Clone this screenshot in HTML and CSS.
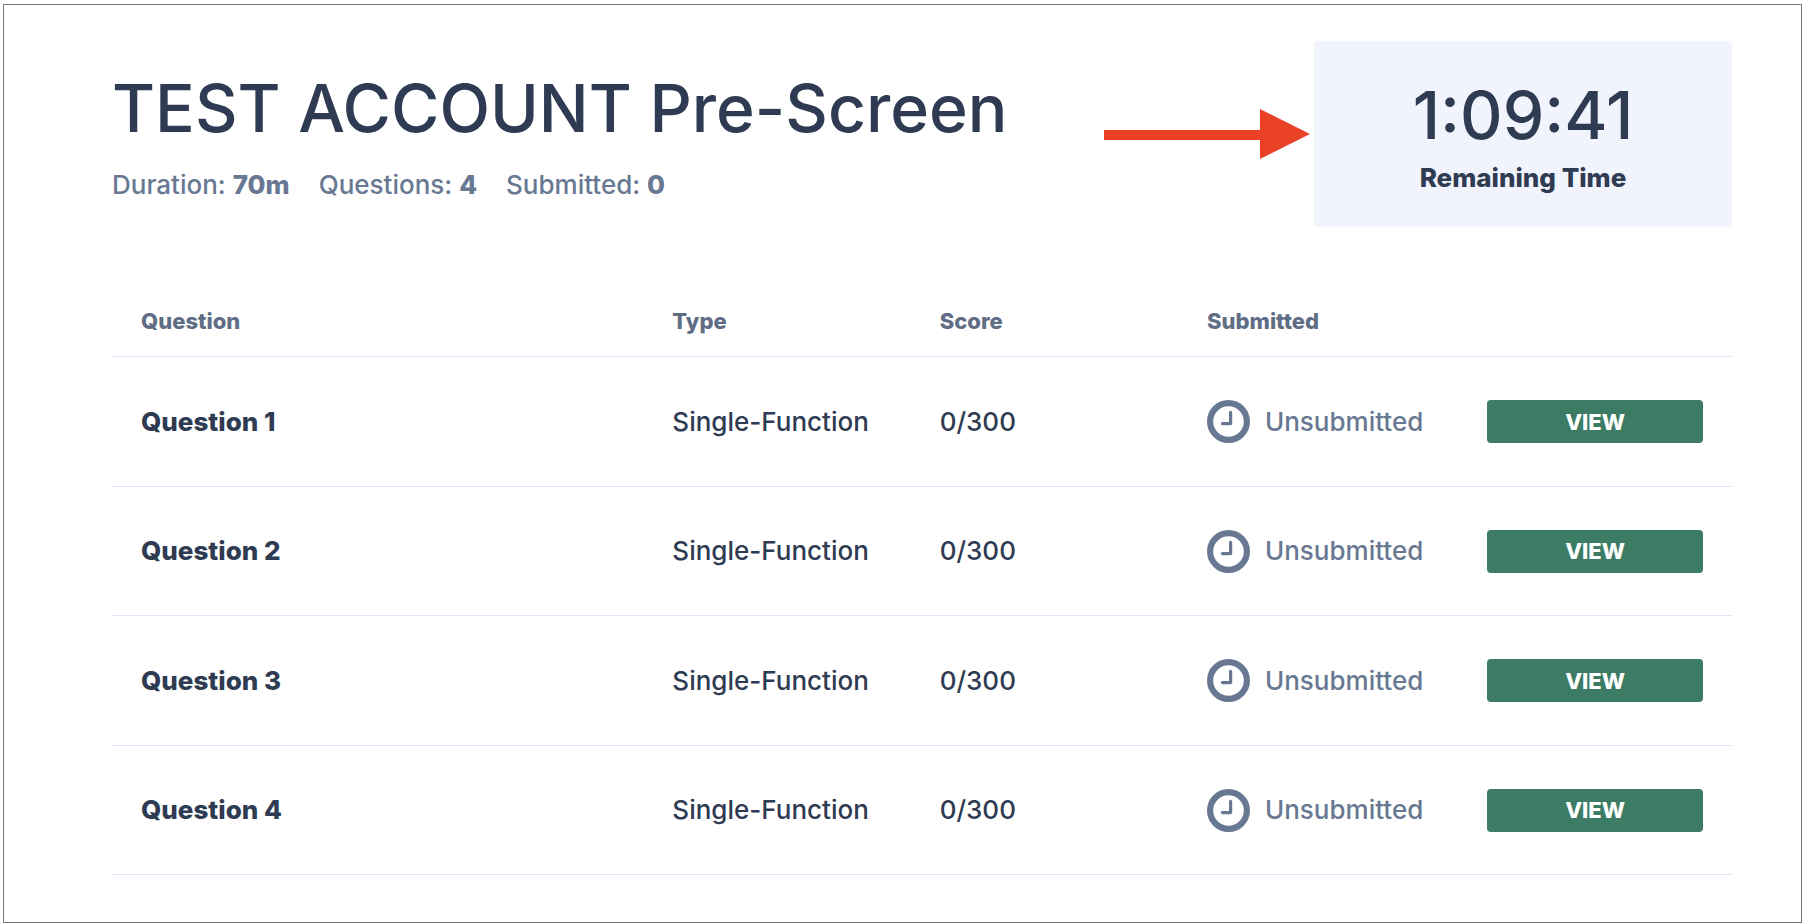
FILE: index.html
```html
<!DOCTYPE html>
<html lang="en">
<head>
  <meta charset="UTF-8">
  <meta name="viewport" content="width=device-width, initial-scale=1.0">
  <title>TEST ACCOUNT Pre-Screen</title>
  <link rel="stylesheet" href="styles.css">
</head>
<body>

  <!-- Clock icon, reused in every row -->
  <svg class="icon-defs" aria-hidden="true">
    <symbol id="clock" viewBox="0 0 43 43">
      <circle cx="21.5" cy="21.5" r="18.4" fill="none" stroke="currentColor" stroke-width="6.2"/>
      <path d="M23.6 12.4V23.6H15.4" fill="none" stroke="currentColor" stroke-width="3.2" stroke-linecap="round" stroke-linejoin="round"/>
    </symbol>
  </svg>

  <main class="page">
    <header class="header">
      <div class="heading">
        <h1>TEST ACCOUNT Pre-Screen</h1>
        <ul class="meta">
          <li>Duration: <strong>70m</strong></li>
          <li>Questions: <strong>4</strong></li>
          <li>Submitted: <strong>0</strong></li>
        </ul>
      </div>
      <svg class="arrow" viewBox="0 0 206 50" aria-hidden="true">
        <path d="M0 21H156V0L206 25L156 50V31H0Z"/>
      </svg>
      <div class="timer">
        <div class="timer-value">1:09:41</div>
        <div class="timer-label">Remaining Time</div>
      </div>
    </header>

    <table class="questions">
      <thead>
        <tr>
          <th class="col-question">Question</th>
          <th class="col-type">Type</th>
          <th class="col-score">Score</th>
          <th class="col-status">Submitted</th>
          <th class="col-action"></th>
        </tr>
      </thead>
      <tbody>
        <tr>
          <td class="name">Question 1</td>
          <td>Single-Function</td>
          <td>0/300</td>
          <td><div class="status"><svg class="clock"><use href="#clock"/></svg>Unsubmitted</div></td>
          <td><button class="view-btn" type="button">VIEW</button></td>
        </tr>
        <tr>
          <td class="name">Question 2</td>
          <td>Single-Function</td>
          <td>0/300</td>
          <td><div class="status"><svg class="clock"><use href="#clock"/></svg>Unsubmitted</div></td>
          <td><button class="view-btn" type="button">VIEW</button></td>
        </tr>
        <tr>
          <td class="name">Question 3</td>
          <td>Single-Function</td>
          <td>0/300</td>
          <td><div class="status"><svg class="clock"><use href="#clock"/></svg>Unsubmitted</div></td>
          <td><button class="view-btn" type="button">VIEW</button></td>
        </tr>
        <tr>
          <td class="name">Question 4</td>
          <td>Single-Function</td>
          <td>0/300</td>
          <td><div class="status"><svg class="clock"><use href="#clock"/></svg>Unsubmitted</div></td>
          <td><button class="view-btn" type="button">VIEW</button></td>
        </tr>
      </tbody>
    </table>
  </main>

</body>
</html>
```

FILE: styles.css
```css
* {
  box-sizing: border-box;
}

body {
  font-family: Inter, "Liberation Sans", sans-serif;
  font-size: 26px;
  font-weight: 500;
  line-height: 30px;
  color: #2e3b52;
  background-color: #fff;
  margin: 0;
  padding: 4px 0 1px 3px;
}

.icon-defs {
  display: none;
}

.page {
  min-height: calc(100vh - 5px);
  padding: 36px 69px 40px 108px;
  border: 1px solid #777;
}

/* Header */
.header {
  display: flex;
  align-items: center;
  gap: 4px;
}

.heading {
  flex: 1;
}

h1 {
  font-size: 66px;
  font-weight: 500;
  line-height: 80px;
  margin: 0;
}

.meta {
  display: flex;
  gap: 29px;
  list-style: none;
  margin: 22px 0 0;
  padding: 0;
  color: #687892;
}

.meta strong {
  font-weight: 800;
}

.arrow {
  width: 206px;
  height: 50px;
  fill: #ea4126;
}

.timer {
  width: 418px;
  padding: 34px 20px;
  text-align: center;
  background-color: #f1f4fc;
  border-radius: 4px;
}

.timer-value {
  font-size: 66px;
  line-height: 80px;
}

.timer-label {
  font-weight: 800;
  margin-top: 8px;
}

/* Questions table */
.questions {
  width: 100%;
  margin-top: 58px;
  table-layout: fixed;
  border-spacing: 0;
}

.questions th,
.questions td {
  padding: 0 0 0 29px;
  text-align: left;
  border-bottom: 1px solid #dfe6fa;
}

.questions th {
  height: 72px;
  font-size: 22px;
  font-weight: 800;
  color: #5f6e85;
}

.questions td {
  height: 130px;
}

.questions tr:nth-child(even) td {
  height: 129px;
}

.questions th:last-child,
.questions td:last-child {
  padding-right: 29px;
}

.questions .name {
  font-weight: 800;
}

.col-question {
  width: 32.8%;
}

.col-type,
.col-score {
  width: 16.5%;
}

.col-status {
  width: 17.3%;
}

.status {
  display: flex;
  align-items: center;
  gap: 15px;
  color: #687892;
}

.clock {
  width: 43px;
  height: 43px;
}

.view-btn {
  display: block;
  width: 100%;
  height: 43px;
  padding: 0;
  font-family: inherit;
  font-size: 22px;
  font-weight: 800;
  color: #fff;
  background-color: #3c7b64;
  border: none;
  border-radius: 4px;
  cursor: pointer;
}
```
